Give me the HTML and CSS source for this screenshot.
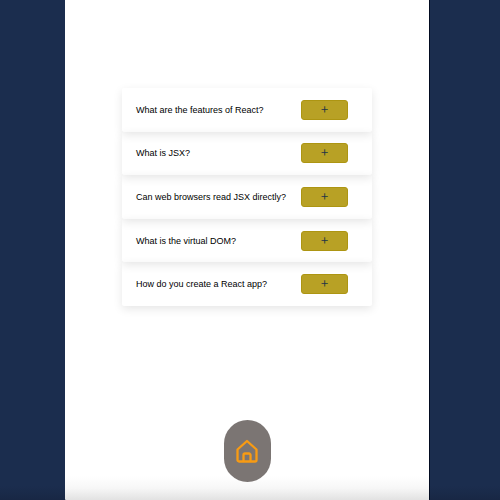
FILE: index.html
```
<!DOCTYPE html>
<html lang="en">
<head>
<meta charset="utf-8">
<meta name="viewport" content="width=device-width, initial-scale=1">
<title>React FAQ</title>
<link rel="stylesheet" href="styles.css">
</head>
<body>
<div class="page">
  <main class="faq">
    <section class="faq-item"><h2 class="question" id="q1">What are the features of React?</h2><button class="toggle" type="button" aria-labelledby="q1" aria-expanded="false">+</button></section>
    <section class="faq-item"><h2 class="question" id="q2">What is JSX?</h2><button class="toggle" type="button" aria-labelledby="q2" aria-expanded="false">+</button></section>
    <section class="faq-item"><h2 class="question" id="q3">Can web browsers read JSX directly?</h2><button class="toggle" type="button" aria-labelledby="q3" aria-expanded="false">+</button></section>
    <section class="faq-item"><h2 class="question" id="q4">What is the virtual DOM?</h2><button class="toggle" type="button" aria-labelledby="q4" aria-expanded="false">+</button></section>
    <section class="faq-item"><h2 class="question" id="q5">How do you create a React app?</h2><button class="toggle" type="button" aria-labelledby="q5" aria-expanded="false">+</button></section>
  </main>
  <footer class="footer">
    <a class="home" href="#" aria-label="Home">
      <svg class="home-icon" viewBox="0 0 24 24" aria-hidden="true">
        <path d="M2.500 10.500 12 2l9.500 8.500V21a1.500 1.500 0 0 1-1.500 1.500H4A1.500 1.500 0 0 1 2.500 21z"/>
        <path d="M8.500 22v-6a1.500 1.500 0 0 1 1.500-1.500h4a1.500 1.500 0 0 1 1.500 1.500v6"/>
      </svg>
    </a>
  </footer>
</div>
</body>
</html>
```
FILE: styles.css
```
* {
  box-sizing: border-box;
}

body {
  margin: 0;
  background: linear-gradient(to top, #182744, #1b2d4e 14px);
  font-family: "Liberation Sans", Arial, sans-serif;
}

.page {
  display: flex;
  flex-direction: column;
  justify-content: space-between;
  align-items: center;
  width: 73%;
  min-height: 100vh;
  margin: 0 auto 0 13%;
  padding-top: 88px;
  border-right: 1px solid #020b20;
  border-radius: 0 0 1px 1px;
  background: linear-gradient(to top, #e2e2e2, #f7f7f7 12px, #fff 24px);
}

.faq {
  display: grid;
  grid-auto-rows: 1fr;
  width: 250px;
  min-height: 218px;
}

.faq-item {
  display: flex;
  align-items: center;
  justify-content: space-between;
  padding: 0 24px 0 14px;
  border-radius: 2px;
  box-shadow: 0 3px 10px rgba(0, 0, 0, 0.1);
}

.question {
  margin: 0;
  font-size: 9px;
  font-weight: 400;
  line-height: 12px;
  white-space: nowrap;
  color: #000;
}

.toggle {
  flex: none;
  width: 47px;
  height: 20px;
  padding: 0 0 4px;
  border: 1px solid #ad9512;
  border-radius: 3px;
  background: #b8a125;
  color: #213547;
  font-family: Inter, sans-serif;
  font-size: 14px;
  font-weight: 300;
  line-height: 14px;
}

.footer {
  padding-bottom: 18px;
}

.home {
  display: flex;
  align-items: center;
  justify-content: center;
  width: 47px;
  height: 62px;
  border-radius: 24px;
  background: #7b7573;
}

.home-icon {
  width: 24px;
  height: 24px;
  fill: none;
  stroke: #f89b13;
  stroke-width: 2.3;
  stroke-linecap: round;
  stroke-linejoin: round;
}
```
